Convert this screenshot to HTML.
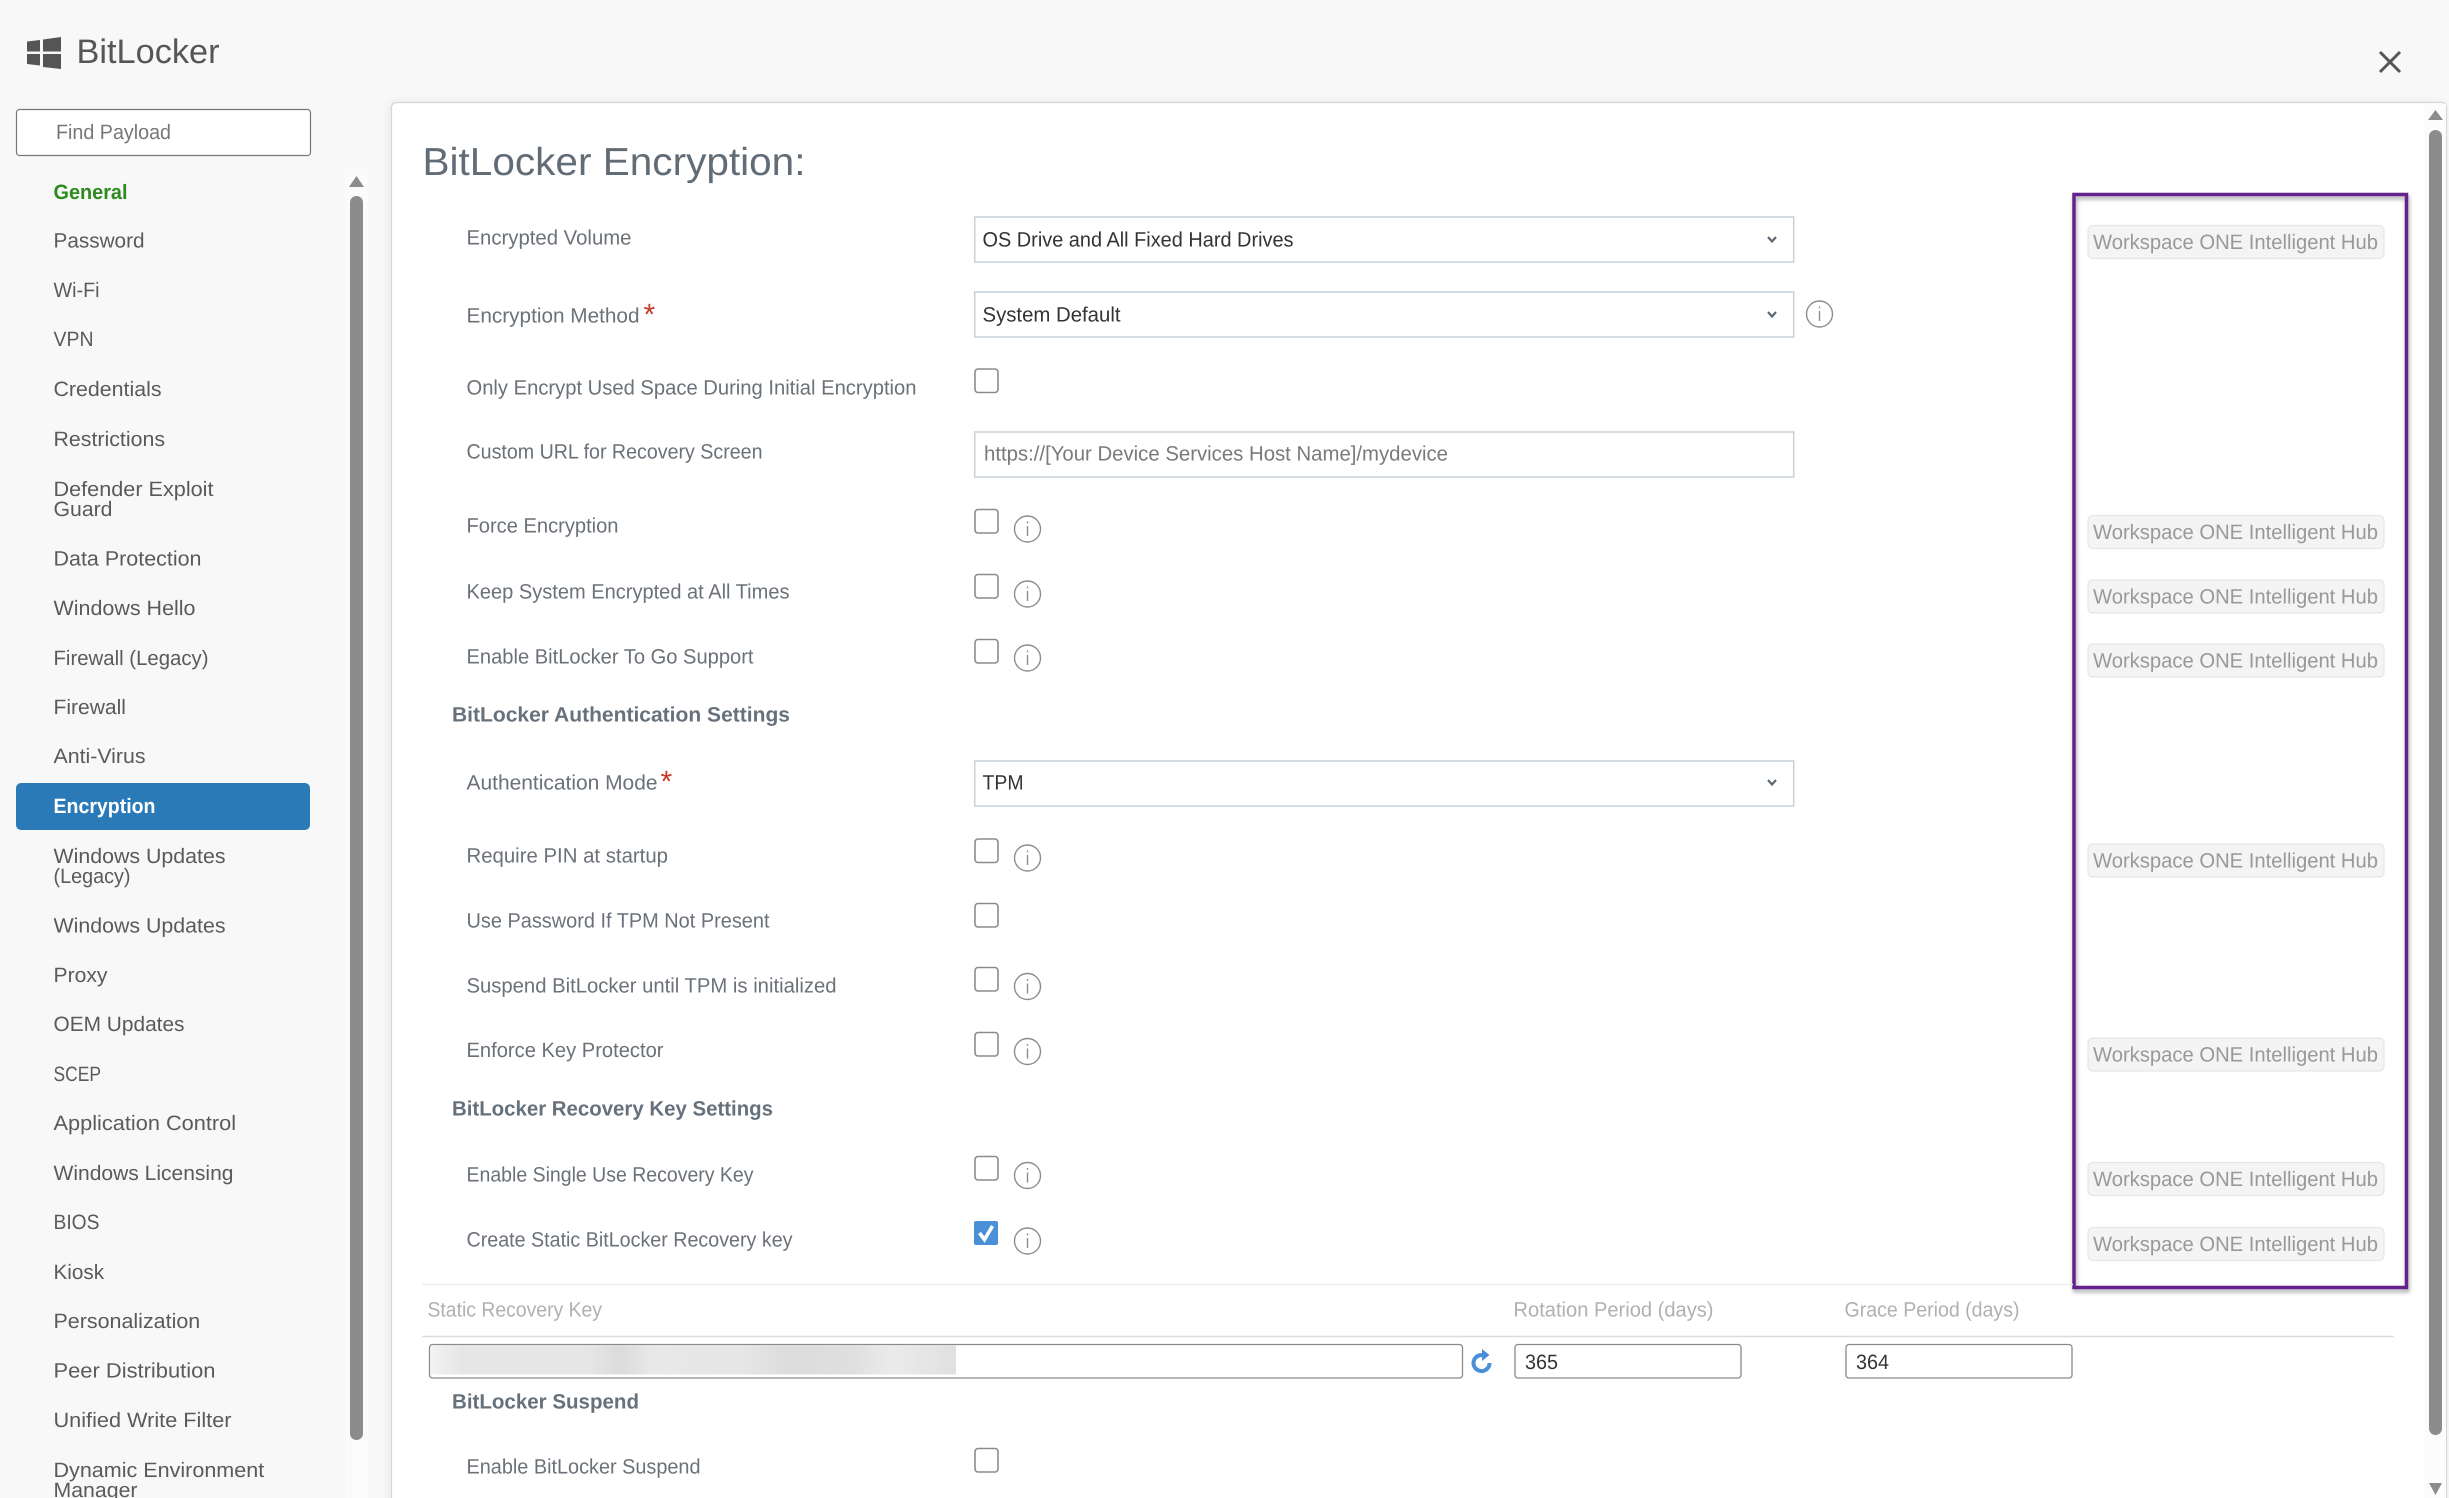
<!DOCTYPE html>
<html><head><meta charset="utf-8"><title>BitLocker</title>
<style>
html,body{margin:0;padding:0;width:2449px;height:1498px;overflow:hidden;background:#f8f8f8}
svg{display:block;position:absolute;left:0;top:0}
text{font-family:"Liberation Sans",sans-serif;text-rendering:geometricPrecision;white-space:pre}
.n{font-size:20.8px;fill:#5a5a5a}
.l{font-size:20.8px;fill:#6b7178}
.h{font-size:20.8px;fill:#66717b;font-weight:bold}
.v{font-size:20.8px;fill:#333}
.g{font-size:20.8px;fill:#b0b0b0}
.t{font-size:20.8px;fill:#999}
.cb{fill:#fff;stroke:#8c8c8c;stroke-width:1.6}
.sel{fill:#fff;stroke:#c6d1da;stroke-width:1.5}
.inp{fill:#fff;stroke:#8a8a8a;stroke-width:1.3}
.tag{fill:#f4f4f4;stroke:#e6e6e6;stroke-width:1.3}
.chev{fill:none;stroke:#5d6770;stroke-width:2.2}
.ic{fill:#fff;stroke:#8c8c8c;stroke-width:1.4}
.il{stroke:#8c8c8c;stroke-width:1.4}
.ast{font-size:30px;fill:#c8392b}
</style></head><body>
<svg width="2449" height="1498" viewBox="0 0 2449 1498" xmlns="http://www.w3.org/2000/svg">
<defs>
<filter id="ps" x="-5%" y="-5%" width="110%" height="110%"><feDropShadow dx="1" dy="3" stdDeviation="2" flood-color="#000" flood-opacity=".35"/></filter>
<filter id="cs" x="-2%" y="-2%" width="104%" height="104%"><feDropShadow dx="-2" dy="0" stdDeviation="4" flood-color="#000" flood-opacity=".06"/></filter>
<linearGradient id="bl" x1="0" x2="1" y1="0" y2="0">
<stop offset="0" stop-color="#f2f2f2"/><stop offset=".06" stop-color="#e6e6e6"/><stop offset=".3" stop-color="#e6e6e6"/><stop offset=".36" stop-color="#dbdbdb"/><stop offset=".42" stop-color="#e8e8e8"/><stop offset=".6" stop-color="#e6e6e6"/><stop offset=".68" stop-color="#dcdcdc"/><stop offset=".8" stop-color="#dfdfdf"/><stop offset=".88" stop-color="#ebebeb"/><stop offset="1" stop-color="#e0e0e0"/>
</linearGradient>
</defs>
<rect width="2449" height="1498" fill="#f8f8f8"/>

<!-- header -->
<path fill="#555" d="M27 41.5L40 40V51.5H27ZM43 39.5L61 37V51.5H43ZM27 54H40V65.5L27 64ZM43 54H61V69L43 67Z"/>
<text x="76.5" y="63" font-size="34" fill="#565656" textLength="143" lengthAdjust="spacingAndGlyphs">BitLocker</text>
<path d="M2380 52L2400 72M2400 52L2380 72" stroke="#555" stroke-width="3" fill="none"/>

<!-- sidebar -->
<rect x="16.5" y="109.5" width="294" height="46" rx="3" fill="#fff" stroke="#777" stroke-width="1.2"/>
<text x="56" y="139" class="n" style="fill:#777" textLength="115" lengthAdjust="spacingAndGlyphs">Find Payload</text>
<rect x="345" y="169" width="23" height="1329" fill="#fbfbfb"/>
<path d="M349 187L356.5 176L364 187Z" fill="#8c8c8c"/>
<rect x="350" y="196" width="13" height="1244" rx="6.5" fill="#8c8c8c"/>
<rect x="16" y="783" width="294" height="47" rx="5" fill="#2a7ab8"/>

<g transform="translate(-0.5,0)">
<text x="54" y="199" font-size="20.8" font-weight="bold" fill="#2e8b1e" textLength="74" lengthAdjust="spacingAndGlyphs">General</text>
<text x="54" y="247.5" class="n" textLength="91" lengthAdjust="spacingAndGlyphs">Password</text>
<text x="54" y="297" class="n" textLength="46" lengthAdjust="spacingAndGlyphs">Wi-Fi</text>
<text x="54" y="346" class="n" textLength="40" lengthAdjust="spacingAndGlyphs">VPN</text>
<text x="54" y="396" class="n" textLength="108" lengthAdjust="spacingAndGlyphs">Credentials</text>
<text x="54" y="446" class="n" textLength="111.5" lengthAdjust="spacingAndGlyphs">Restrictions</text>
<text x="54" y="496" class="n" textLength="160" lengthAdjust="spacingAndGlyphs">Defender Exploit</text>
<text x="54" y="516" class="n" textLength="59" lengthAdjust="spacingAndGlyphs">Guard</text>
<text x="54" y="565.5" class="n" textLength="148" lengthAdjust="spacingAndGlyphs">Data Protection</text>
<text x="54" y="615" class="n" textLength="142" lengthAdjust="spacingAndGlyphs">Windows Hello</text>
<text x="54" y="665" class="n" textLength="155" lengthAdjust="spacingAndGlyphs">Firewall (Legacy)</text>
<text x="54" y="714" class="n" textLength="72.5" lengthAdjust="spacingAndGlyphs">Firewall</text>
<text x="54" y="763" class="n" textLength="92" lengthAdjust="spacingAndGlyphs">Anti-Virus</text>
<text x="54" y="813" font-size="20.8" font-weight="bold" fill="#fff" textLength="102" lengthAdjust="spacingAndGlyphs">Encryption</text>
<text x="54" y="863" class="n" textLength="172" lengthAdjust="spacingAndGlyphs">Windows Updates</text>
<text x="54" y="883" class="n" textLength="77" lengthAdjust="spacingAndGlyphs">(Legacy)</text>
<text x="54" y="932.5" class="n" textLength="172" lengthAdjust="spacingAndGlyphs">Windows Updates</text>
<text x="54" y="982" class="n" textLength="54" lengthAdjust="spacingAndGlyphs">Proxy</text>
<text x="54" y="1031" class="n" textLength="131" lengthAdjust="spacingAndGlyphs">OEM Updates</text>
<text x="54" y="1081" class="n" textLength="47.5" lengthAdjust="spacingAndGlyphs">SCEP</text>
<text x="54" y="1130" class="n" textLength="182.6" lengthAdjust="spacingAndGlyphs">Application Control</text>
<text x="54" y="1180" class="n" textLength="180" lengthAdjust="spacingAndGlyphs">Windows Licensing</text>
<text x="54" y="1229" class="n" textLength="46" lengthAdjust="spacingAndGlyphs">BIOS</text>
<text x="54" y="1279" class="n" textLength="50.6" lengthAdjust="spacingAndGlyphs">Kiosk</text>
<text x="54" y="1328" class="n" textLength="146.7" lengthAdjust="spacingAndGlyphs">Personalization</text>
<text x="54" y="1377.5" class="n" textLength="162" lengthAdjust="spacingAndGlyphs">Peer Distribution</text>
<text x="54" y="1427" class="n" textLength="178" lengthAdjust="spacingAndGlyphs">Unified Write Filter</text>
<text x="54" y="1477" class="n" textLength="210.7" lengthAdjust="spacingAndGlyphs">Dynamic Environment</text>
<text x="54" y="1497" class="n" textLength="84" lengthAdjust="spacingAndGlyphs">Manager</text>
</g>

<!-- main card -->
<rect x="391.5" y="102.5" width="2055" height="1420" rx="5" fill="#fff" stroke="#d6d6d6" stroke-width="1.2" filter="url(#cs)"/>
<rect x="2424" y="104" width="22" height="1394" fill="#fcfcfc"/>
<path d="M2428 120L2435.5 110L2443 120Z" fill="#8c8c8c"/>
<rect x="2429" y="130" width="13" height="1305" rx="6.5" fill="#8c8c8c"/>
<path d="M2429 1483L2435.5 1495L2442 1483Z" fill="#8c8c8c"/>

<text x="422.5" y="175" font-size="39" fill="#616c76" textLength="383" lengthAdjust="spacingAndGlyphs">BitLocker Encryption:</text>

<!-- labels -->
<g transform="translate(-0.5,-0.3)">
<text x="467" y="245" class="l" textLength="165" lengthAdjust="spacingAndGlyphs">Encrypted Volume</text>
<text x="467" y="323" class="l" textLength="173" lengthAdjust="spacingAndGlyphs">Encryption Method</text>
<text x="644" y="325" class="ast">*</text>
<text x="467" y="395" class="l" textLength="450" lengthAdjust="spacingAndGlyphs">Only Encrypt Used Space During Initial Encryption</text>
<text x="467" y="459" class="l" textLength="296" lengthAdjust="spacingAndGlyphs">Custom URL for Recovery Screen</text>
<text x="467" y="533" class="l" textLength="152" lengthAdjust="spacingAndGlyphs">Force Encryption</text>
<text x="467" y="599" class="l" textLength="323" lengthAdjust="spacingAndGlyphs">Keep System Encrypted at All Times</text>
<text x="467" y="664" class="l" textLength="287" lengthAdjust="spacingAndGlyphs">Enable BitLocker To Go Support</text>
<text x="452.5" y="722" class="h" textLength="338" lengthAdjust="spacingAndGlyphs">BitLocker Authentication Settings</text>
<text x="467" y="790" class="l" textLength="191" lengthAdjust="spacingAndGlyphs">Authentication Mode</text>
<text x="661" y="792" class="ast">*</text>
<text x="467" y="863" class="l" textLength="201.5" lengthAdjust="spacingAndGlyphs">Require PIN at startup</text>
<text x="467" y="928" class="l" textLength="303" lengthAdjust="spacingAndGlyphs">Use Password If TPM Not Present</text>
<text x="467" y="993" class="l" textLength="370" lengthAdjust="spacingAndGlyphs">Suspend BitLocker until TPM is initialized</text>
<text x="467" y="1057.5" class="l" textLength="197" lengthAdjust="spacingAndGlyphs">Enforce Key Protector</text>
<text x="452.5" y="1116" class="h" textLength="321" lengthAdjust="spacingAndGlyphs">BitLocker Recovery Key Settings</text>
<text x="467" y="1182" class="l" textLength="287" lengthAdjust="spacingAndGlyphs">Enable Single Use Recovery Key</text>
<text x="467" y="1247" class="l" textLength="326" lengthAdjust="spacingAndGlyphs">Create Static BitLocker Recovery key</text>
<text x="452.5" y="1409" class="h" textLength="187" lengthAdjust="spacingAndGlyphs">BitLocker Suspend</text>
<text x="467" y="1474" class="l" textLength="234" lengthAdjust="spacingAndGlyphs">Enable BitLocker Suspend</text>
</g>

<!-- selects and input -->
<rect x="974.7" y="217" width="819" height="45" class="sel"/>
<rect x="974.7" y="292" width="819" height="45" class="sel"/>
<rect x="974.7" y="432" width="819" height="45" class="sel"/>
<rect x="974.7" y="761" width="819" height="45" class="sel"/>
<text x="982.5" y="246.5" class="v" textLength="311" lengthAdjust="spacingAndGlyphs">OS Drive and All Fixed Hard Drives</text>
<text x="982.5" y="321.5" class="v" textLength="138" lengthAdjust="spacingAndGlyphs">System Default</text>
<text x="982.5" y="789.5" class="v" textLength="41" lengthAdjust="spacingAndGlyphs">TPM</text>
<text x="984" y="460.5" class="l" style="fill:#7a7a7a" textLength="464" lengthAdjust="spacingAndGlyphs">https://[Your Device Services Host Name]/mydevice</text>
<path class="chev" d="M1768 237L1772 241.5L1776 237"/>
<path class="chev" d="M1768 312L1772 316.5L1776 312"/>
<path class="chev" d="M1768 780L1772 784.5L1776 780"/>
<circle cx="1819.5" cy="314" r="13" class="ic"/><path class="il" d="M1819.5 306.5v1.8M1819.5 311v10"/>

<!-- checkboxes -->
<rect x="975" y="369" width="23" height="23.5" rx="3" class="cb"/>
<rect x="975" y="509.5" width="23" height="23.5" rx="3" class="cb"/>
<rect x="975" y="574.5" width="23" height="23.5" rx="3" class="cb"/>
<rect x="975" y="639.5" width="23" height="23.5" rx="3" class="cb"/>
<rect x="975" y="839" width="23" height="23.5" rx="3" class="cb"/>
<rect x="975" y="903.5" width="23" height="23.5" rx="3" class="cb"/>
<rect x="975" y="967.5" width="23" height="23.5" rx="3" class="cb"/>
<rect x="975" y="1032.5" width="23" height="23.5" rx="3" class="cb"/>
<rect x="975" y="1156.5" width="23" height="23.5" rx="3" class="cb"/>
<rect x="974" y="1221" width="24" height="24" rx="2" fill="#4a90d9"/>
<path d="M979.5 1233L984.5 1239.5L992.5 1226" fill="none" stroke="#fff" stroke-width="3.6"/>
<rect x="975" y="1448.5" width="23" height="23.5" rx="3" class="cb"/>

<!-- info icons -->
<g>
<circle cx="1027.5" cy="529" r="13" class="ic"/><path class="il" d="M1027.5 521.5v1.8M1027.5 526v10"/>
<circle cx="1027.5" cy="594" r="13" class="ic"/><path class="il" d="M1027.5 586.5v1.8M1027.5 591v10"/>
<circle cx="1027.5" cy="658" r="13" class="ic"/><path class="il" d="M1027.5 650.5v1.8M1027.5 655v10"/>
<circle cx="1027.5" cy="858" r="13" class="ic"/><path class="il" d="M1027.5 850.5v1.8M1027.5 855v10"/>
<circle cx="1027.5" cy="986.5" r="13" class="ic"/><path class="il" d="M1027.5 979v1.8M1027.5 983.5v10"/>
<circle cx="1027.5" cy="1051.5" r="13" class="ic"/><path class="il" d="M1027.5 1044v1.8M1027.5 1048.5v10"/>
<circle cx="1027.5" cy="1175.5" r="13" class="ic"/><path class="il" d="M1027.5 1168v1.8M1027.5 1172.5v10"/>
<circle cx="1027.5" cy="1241" r="13" class="ic"/><path class="il" d="M1027.5 1233.5v1.8M1027.5 1238v10"/>
</g>

<!-- purple box -->
<rect x="2074" y="194.5" width="332.5" height="1093" fill="none" stroke="#65208c" stroke-width="3.5" filter="url(#ps)"/>
<g transform="translate(-1,0)">
<rect x="2089" y="225.5" width="296" height="33" rx="5" class="tag"/><text x="2094" y="249" class="t" textLength="285" lengthAdjust="spacingAndGlyphs">Workspace ONE Intelligent Hub</text>
<rect x="2089" y="515.5" width="296" height="33" rx="5" class="tag"/><text x="2094" y="539" class="t" textLength="285" lengthAdjust="spacingAndGlyphs">Workspace ONE Intelligent Hub</text>
<rect x="2089" y="580" width="296" height="33" rx="5" class="tag"/><text x="2094" y="603.5" class="t" textLength="285" lengthAdjust="spacingAndGlyphs">Workspace ONE Intelligent Hub</text>
<rect x="2089" y="644" width="296" height="33" rx="5" class="tag"/><text x="2094" y="667.5" class="t" textLength="285" lengthAdjust="spacingAndGlyphs">Workspace ONE Intelligent Hub</text>
<rect x="2089" y="844" width="296" height="33" rx="5" class="tag"/><text x="2094" y="867.5" class="t" textLength="285" lengthAdjust="spacingAndGlyphs">Workspace ONE Intelligent Hub</text>
<rect x="2089" y="1038" width="296" height="33" rx="5" class="tag"/><text x="2094" y="1061.5" class="t" textLength="285" lengthAdjust="spacingAndGlyphs">Workspace ONE Intelligent Hub</text>
<rect x="2089" y="1162.5" width="296" height="33" rx="5" class="tag"/><text x="2094" y="1186" class="t" textLength="285" lengthAdjust="spacingAndGlyphs">Workspace ONE Intelligent Hub</text>
<rect x="2089" y="1227.5" width="296" height="33" rx="5" class="tag"/><text x="2094" y="1251" class="t" textLength="285" lengthAdjust="spacingAndGlyphs">Workspace ONE Intelligent Hub</text>
</g>

<!-- static recovery key row -->
<path d="M422 1284.5H2073" stroke="#efefef" stroke-width="1.5"/>
<path d="M422 1336.5H2394" stroke="#dcdcdc" stroke-width="1.5"/>
<text x="427.5" y="1316.5" class="g" textLength="174.5" lengthAdjust="spacingAndGlyphs">Static Recovery Key</text>
<text x="1513.5" y="1316.5" class="g" textLength="200" lengthAdjust="spacingAndGlyphs">Rotation Period (days)</text>
<text x="1844.5" y="1316.5" class="g" textLength="175" lengthAdjust="spacingAndGlyphs">Grace Period (days)</text>
<rect x="429.5" y="1344.5" width="1033" height="33.5" rx="3" class="inp"/>
<rect x="431" y="1345.5" width="525" height="29" fill="url(#bl)"/>
<path d="M1486.5 1356.8A8 8 0 1 0 1489.5 1363" fill="none" stroke="#4a90d9" stroke-width="4"/>
<path d="M1482 1349L1489.5 1355L1482 1361Z" fill="#4a90d9"/>
<rect x="1515" y="1344.5" width="226" height="33.5" rx="3" class="inp"/>
<text x="1525" y="1369" class="v" textLength="33" lengthAdjust="spacingAndGlyphs">365</text>
<rect x="1846" y="1344.5" width="226" height="33.5" rx="3" class="inp"/>
<text x="1856" y="1369" class="v" textLength="33" lengthAdjust="spacingAndGlyphs">364</text>
</svg>
</body></html>
